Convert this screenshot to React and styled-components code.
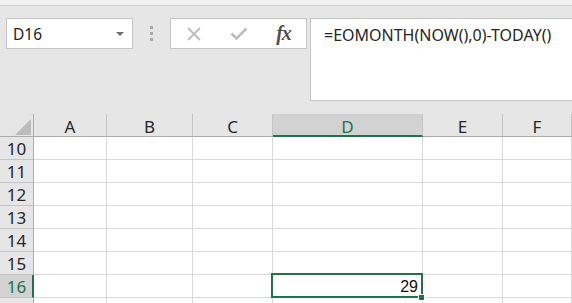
import styled, { createGlobalStyle } from 'styled-components';

const GlobalStyle = createGlobalStyle`
  html, body {
    margin: 0;
    padding: 0;
    background: #e6e6e6;
    overflow: hidden;
  }
  body {
    font-family: 'Noto Sans', 'Open Sans', sans-serif;
  }
`;

const green = '#217346';

const Window = styled.div`
  width: 572px;
  height: 303px;
  overflow: hidden;
  background: #e6e6e6;
  display: flex;
  flex-direction: column;
`;

const TopStrip = styled.div`
  height: 5px;
  flex: none;
  background: #f1f1f1;
  border-bottom: 1px solid #d2d2d2;
`;

const FormulaBar = styled.div`
  height: 108px;
  flex: none;
  box-sizing: border-box;
  padding: 12px 0 0 6px;
  display: flex;
  align-items: flex-start;
`;

const Box = styled.div`
  box-sizing: border-box;
  height: 31px;
  background: #fff;
  border: 1px solid #c6c6c6;
  display: flex;
  align-items: center;
`;

const NameBox = styled(Box)`
  width: 127px;
  padding: 0 8px 0 6px;
  justify-content: space-between;
  font-size: 15.5px;
  color: #262626;
`;

const Caret = styled.span`
  width: 0;
  height: 0;
  border-left: 4px solid transparent;
  border-right: 4px solid transparent;
  border-top: 4px solid #6f6f6f;
  margin-top: 1px;
`;

const Grip = styled.div`
  width: 37px;
  height: 31px;
  display: flex;
  flex-direction: column;
  align-items: center;
  justify-content: center;
  gap: 3px;
`;

const GripDot = styled.span`
  width: 3px;
  height: 3px;
  background: #a9a9a9;
`;

const FnBox = styled(Box)`
  width: 137px;
`;

const FnSlot = styled.div`
  width: 45px;
  height: 100%;
  display: flex;
  align-items: center;
  justify-content: center;
`;

const FxLabel = styled.span`
  font-family: 'Liberation Serif', serif;
  font-style: italic;
  font-weight: bold;
  font-size: 20px;
  color: #505050;
  letter-spacing: -1px;
  margin-top: -1px;
`;

const FormulaBox = styled.div`
  flex: 1;
  margin-left: 3px;
  box-sizing: border-box;
  height: 83px;
  background: #fff;
  border: 1px solid #c6c6c6;
  border-right: none;
  padding: 5px 0 0 13px;
  font-size: 16px;
  color: #262626;
`;

const Sheet = styled.div`
  display: grid;
  grid-template-columns: 34px 73px 86px 80px 150px 80px 1fr;
  grid-auto-rows: 23px;
  background: #fff;
`;

const Corner = styled.div`
  position: relative;
  box-sizing: border-box;
  background: #e6e6e6;
  border-right: 1px solid #ababab;
  border-bottom: 1px solid #ababab;
`;

const ColHeader = styled.div`
  box-sizing: border-box;
  background: ${(p) => (p.$active ? '#d2d2d2' : '#e6e6e6')};
  border-right: 1px solid #c4c4c4;
  border-bottom: ${(p) => (p.$active ? `2px solid ${green}` : '1px solid #ababab')};
  display: flex;
  align-items: center;
  justify-content: center;
  font-size: 17px;
  color: ${(p) => (p.$active ? green : '#262626')};
  padding-top: ${(p) => (p.$active ? '3px' : '2px')};
`;

const RowHeader = styled.div`
  box-sizing: border-box;
  background: ${(p) => (p.$active ? '#d2d2d2' : '#e6e6e6')};
  border-bottom: 1px solid #c4c4c4;
  border-right: ${(p) => (p.$active ? `2px solid ${green}` : '1px solid #ababab')};
  display: flex;
  align-items: center;
  justify-content: center;
  font-size: 17px;
  color: ${(p) => (p.$active ? green : '#262626')};
  padding: ${(p) => (p.$active ? '1px 0 0 1px' : '1px 0 0 0')};
`;

const Cell = styled.div`
  position: relative;
  box-sizing: border-box;
  border-right: 1px solid #d9d9d9;
  border-bottom: 1px solid #d9d9d9;
  display: flex;
  align-items: flex-end;
  justify-content: flex-end;
  padding: 0 4px 1px 0;
  font-family: 'Liberation Sans', Arial, sans-serif;
  font-size: 16px;
  color: #111;

  ${(p) =>
    p.$selected &&
    `
    z-index: 1;
    &::after {
      content: '';
      position: absolute;
      top: -2px;
      left: -2px;
      right: -1px;
      bottom: -1px;
      border: 2px solid ${green};
    }
  `}
`;

const FillHandle = styled.span`
  position: absolute;
  right: -3px;
  bottom: -4px;
  width: 5px;
  height: 5px;
  background: ${green};
  border: 1px solid #fff;
  z-index: 2;
`;

const columns = ['A', 'B', 'C', 'D', 'E', 'F'];
const rows = [10, 11, 12, 13, 14, 15, 16, 17];
const lastRow = 17;

const CrossIcon = () => (
  <svg width="16" height="16" viewBox="0 0 16 16">
    <path d="M2 2 L14 14 M14 2 L2 14" stroke="#bdbdbd" strokeWidth="1.8" fill="none" />
  </svg>
);

const CheckIcon = () => (
  <svg width="18" height="14" viewBox="0 0 18 14">
    <path d="M1.5 6.5 L6.5 11.5 L16.5 1.5" stroke="#bdbdbd" strokeWidth="2.6" fill="none" />
  </svg>
);

const CornerTriangle = () => (
  <svg width="34" height="23" viewBox="0 0 34 23" style={{ position: 'absolute', left: 0, top: 0 }}>
    <polygon points="15,21 31,5 31,21" fill="#bcbcbc" />
  </svg>
);

export default function App() {
  return (
    <Window>
      <GlobalStyle />
      <TopStrip />
      <FormulaBar>
        <NameBox>
          <span>D16</span>
          <Caret />
        </NameBox>
        <Grip>
          <GripDot />
          <GripDot />
          <GripDot />
        </Grip>
        <FnBox>
          <FnSlot>
            <CrossIcon />
          </FnSlot>
          <FnSlot>
            <CheckIcon />
          </FnSlot>
          <FnSlot>
            <FxLabel>fx</FxLabel>
          </FnSlot>
        </FnBox>
        <FormulaBox>=EOMONTH(NOW(),0)-TODAY()</FormulaBox>
      </FormulaBar>
      <Sheet>
        <Corner>
          <CornerTriangle />
        </Corner>
        {columns.map((c) => (
          <ColHeader key={c} $active={c === 'D'}>
            {c}
          </ColHeader>
        ))}
        {rows.map((r) => [
          <RowHeader key={`h${r}`} $active={r === 16}>
            {r !== lastRow && r}
          </RowHeader>,
          ...columns.map((c) => {
            const selected = r === 16 && c === 'D';
            return (
              <Cell key={`${c}${r}`} $selected={selected}>
                {selected && '29'}
                {selected && <FillHandle />}
              </Cell>
            );
          }),
        ])}
      </Sheet>
    </Window>
  );
}
